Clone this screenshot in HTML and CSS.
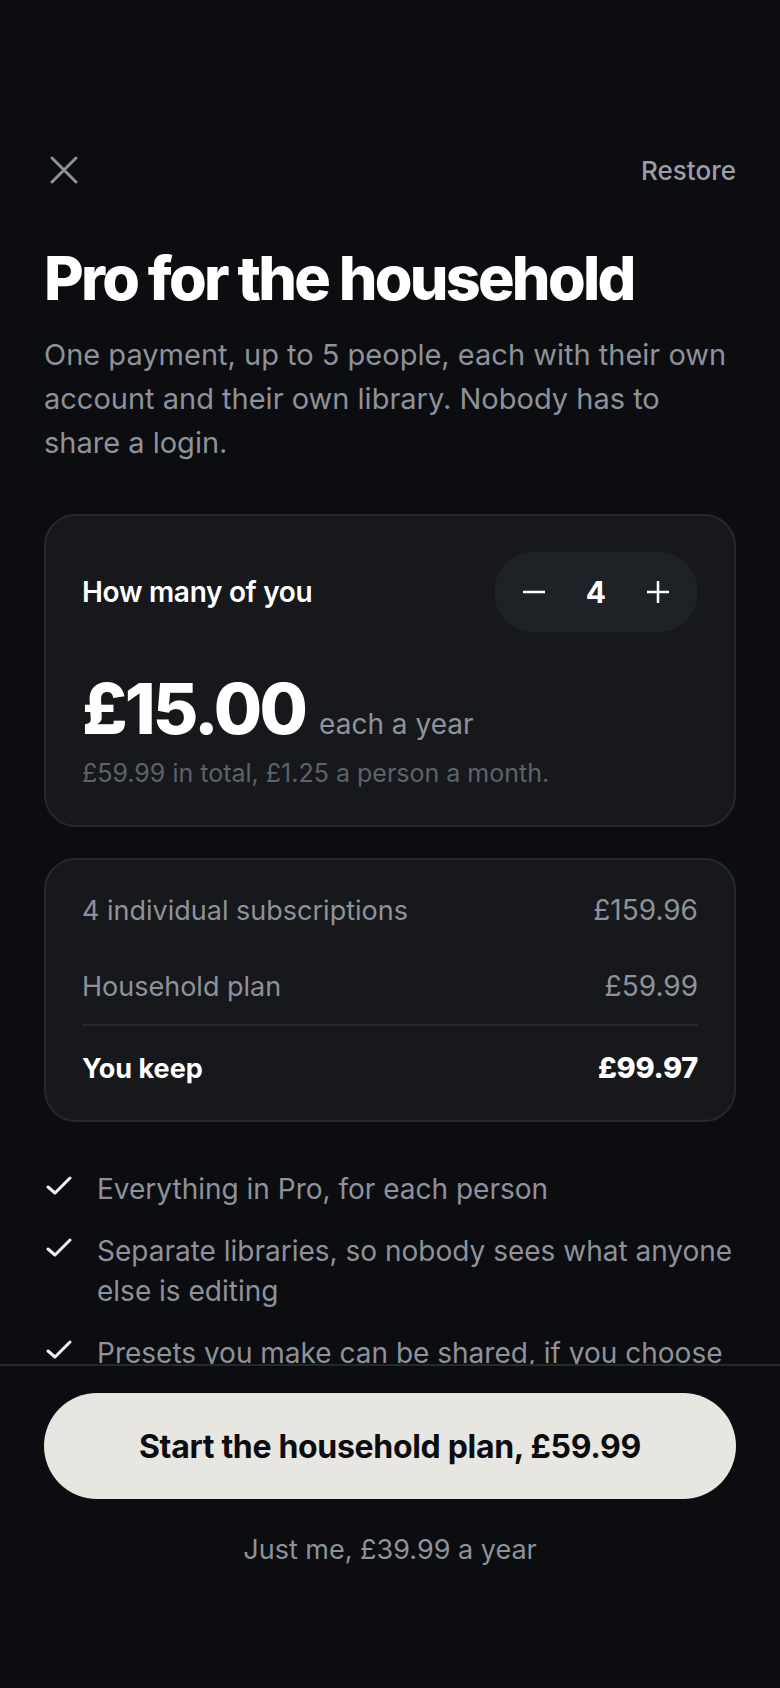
FILE: index.html
```html
<!DOCTYPE html>
<html lang="en">
<head>
    <meta charset="UTF-8">
    <meta name="viewport" content="width=device-width, initial-scale=1.0">
    <title>Pro for the household</title>
    <link rel="stylesheet" href="styles.css">
</head>
<body>
    <main class="sheet">
        <div class="topbar">
            <button class="close" type="button" aria-label="Close">
                <svg width="28" height="28" viewBox="0 0 28 28"><path d="M2 2 L26 26 M26 2 L2 26" /></svg>
            </button>
            <a class="restore" href="#">Restore</a>
        </div>

        <h1>Pro for the household</h1>
        <p class="lead">One payment, up to 5 people, each with their own account and their own library. Nobody has to share a login.</p>

        <section class="card seats">
            <div class="seats-row">
                <span class="seats-label">How many of you</span>
                <div class="stepper">
                    <button type="button" aria-label="Fewer">
                        <svg width="24" height="24" viewBox="0 0 24 24"><path d="M1 12 H23" /></svg>
                    </button>
                    <span class="count">4</span>
                    <button type="button" aria-label="More">
                        <svg width="24" height="24" viewBox="0 0 24 24"><path d="M1 12 H23 M12 1 V23" /></svg>
                    </button>
                </div>
            </div>
            <div class="price">
                <span class="amount">£15.00</span>
                <span class="per">each a year</span>
            </div>
            <p class="price-note">£59.99 in total, £1.25 a person a month.</p>
        </section>

        <section class="card compare">
            <div class="line">
                <span>4 individual subscriptions</span>
                <span class="value">£159.96</span>
            </div>
            <div class="line">
                <span>Household plan</span>
                <span class="value">£59.99</span>
            </div>
            <div class="line total">
                <span>You keep</span>
                <span class="value">£99.97</span>
            </div>
        </section>

        <ul class="perks">
            <li>
                <svg width="26" height="20" viewBox="0 0 26 20"><path d="M2 11 L9 17 L24 2" /></svg>
                <span>Everything in Pro, for each person</span>
            </li>
            <li>
                <svg width="26" height="20" viewBox="0 0 26 20"><path d="M2 11 L9 17 L24 2" /></svg>
                <span>Separate libraries, so nobody sees what anyone else is editing</span>
            </li>
            <li>
                <svg width="26" height="20" viewBox="0 0 26 20"><path d="M2 11 L9 17 L24 2" /></svg>
                <span>Presets you make can be shared, if you choose</span>
            </li>
        </ul>
    </main>

    <footer class="actions">
        <button type="button" class="cta">Start the household plan, £59.99</button>
        <a class="alt" href="#">Just me, £39.99 a year</a>
    </footer>
</body>
</html>
```

FILE: styles.css
```css
* {
    box-sizing: border-box;
}

html, body {
    height: 100%;
}

body {
    margin: 0;
    height: 1688px;
    display: flex;
    flex-direction: column;
    background-color: #0c0d10;
    color: #ffffff;
    font-family: 'Inter', 'Liberation Sans', sans-serif;
}

button {
    font-family: inherit;
    border: none;
    background: none;
    padding: 0;
    cursor: pointer;
}

a {
    text-decoration: none;
}

.sheet {
    flex: 1;
    overflow: hidden;
    padding: 142px 44px 0;
}

.topbar {
    height: 56px;
    display: flex;
    align-items: center;
    justify-content: space-between;
}

.close {
    width: 40px;
    height: 40px;
    display: flex;
    align-items: center;
    justify-content: center;
}

.close svg path {
    fill: none;
    stroke: #8e9199;
    stroke-width: 3;
    stroke-linecap: round;
}

.restore {
    color: #9a9ea6;
    font-size: 26px;
    font-weight: 500;
}

h1 {
    margin: 47px 0 0;
    font-size: 61px;
    line-height: 66px;
    font-weight: 800;
    letter-spacing: -0.045em;
}

.lead {
    margin: 22px 0 0;
    color: #8e929a;
    font-size: 29px;
    line-height: 44px;
}

.card {
    background-color: #16181c;
    border: 2px solid #25282d;
    border-radius: 32px;
}

.seats {
    margin-top: 49px;
    padding: 36px 36px 36px;
}

.seats-row {
    display: flex;
    align-items: center;
    justify-content: space-between;
}

.seats-label {
    font-size: 28px;
    font-weight: 600;
    letter-spacing: -0.01em;
}

.stepper {
    display: flex;
    align-items: center;
    height: 80px;
    border-radius: 40px;
    background-color: #1e2125;
}

.stepper button {
    width: 80px;
    height: 80px;
    display: flex;
    align-items: center;
    justify-content: center;
}

.stepper svg path {
    fill: none;
    stroke: #ffffff;
    stroke-width: 2.5;
}

.count {
    width: 44px;
    text-align: center;
    font-size: 30px;
    font-weight: 700;
}

.price {
    margin-top: 41px;
    display: flex;
    align-items: baseline;
    gap: 14px;
}

.amount {
    font-size: 70px;
    line-height: 72px;
    font-weight: 800;
    letter-spacing: -0.04em;
}

.per {
    color: #8e929a;
    font-size: 28px;
}

.price-note {
    margin: 12px 0 0;
    color: #5e626b;
    font-size: 25px;
    line-height: 32px;
}

.compare {
    margin-top: 31px;
    padding: 30px 36px 31px;
}

.line {
    display: flex;
    justify-content: space-between;
    align-items: baseline;
    color: #8e929a;
    font-size: 27px;
    line-height: 40px;
}

.line .value {
    font-size: 28px;
}

.line + .line {
    margin-top: 35px;
}

.line.total {
    margin-top: 17px;
    padding-top: 22px;
    border-top: 2px solid #25282d;
    color: #ffffff;
    font-weight: 700;
}

.line.total .value {
    font-size: 29px;
    font-weight: 800;
    letter-spacing: -0.01em;
}

.perks {
    list-style: none;
    margin: 47px 0 0;
    padding: 0;
}

.perks li {
    display: flex;
    align-items: flex-start;
    gap: 25px;
    color: #8e929a;
    font-size: 28px;
    line-height: 40px;
}

.perks li + li {
    margin-top: 22px;
}

.perks svg {
    flex: none;
    margin-top: 7px;
    margin-left: 2px;
}

.perks svg path {
    fill: none;
    stroke: #f2f2f2;
    stroke-width: 3;
    stroke-linecap: round;
    stroke-linejoin: round;
}

.actions {
    flex: none;
    height: 324px;
    border-top: 2px solid #25282d;
    padding: 27px 44px 0;
    display: flex;
    flex-direction: column;
    align-items: center;
}

.cta {
    width: 100%;
    height: 106px;
    border-radius: 53px;
    background-color: #e8e6e1;
    color: #0c0d10;
    font-size: 32px;
    font-weight: 700;
    letter-spacing: -0.01em;
}

.alt {
    margin-top: 31px;
    color: #8e929a;
    font-size: 27px;
    line-height: 40px;
}
```
